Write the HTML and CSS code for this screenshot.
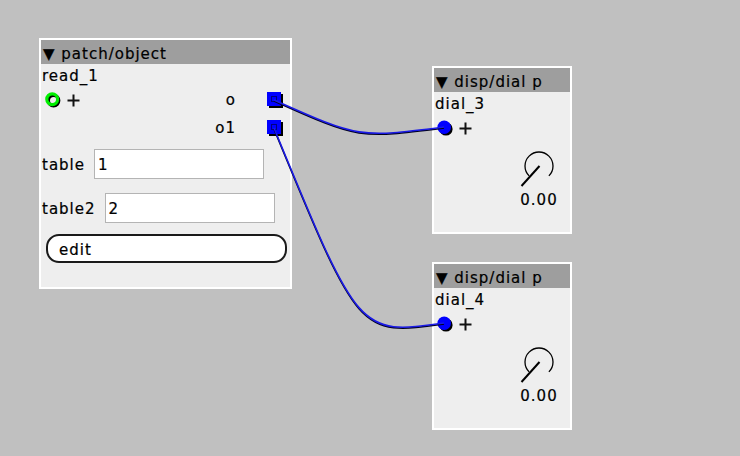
FILE: index.html
```html
<!DOCTYPE html>
<html>
<head>
<meta charset="utf-8">
<link rel="stylesheet" href="styles.css">
</head>
<body>
<div class="canvas">
  <div class="obj patch">
    <div class="hdr">▼ patch/object</div>
    <div class="name">read_1</div>
    <div class="io">
      <div class="inlets">
        <div class="jrow">
          <svg class="ring" width="16" height="16" viewBox="0 0 16 16"><circle cx="8.6" cy="8.6" r="5.2" fill="none" stroke="#000" stroke-width="3.2"/><circle cx="7.2" cy="7.2" r="5.4" fill="none" stroke="#00ee00" stroke-width="3.2"/></svg>
          <svg class="plus" width="13" height="13" viewBox="0 0 13 13"><path d="M6.5 0.5V12.5M0.5 6.5H12.5" stroke="#111" stroke-width="2"/></svg>
        </div>
      </div>
      <div class="outlets">
        <div class="orow"><span class="olbl">o</span><svg class="sq" width="16" height="16" viewBox="0 0 16 16"><rect x="2" y="2" width="14" height="14" fill="#000"/><rect x="0" y="0" width="14" height="14" fill="#0000ff"/><rect x="4.5" y="4.5" width="5" height="5" fill="none" stroke="#000" stroke-width="1" stroke-dasharray="1 1"/></svg></div>
        <div class="orow"><span class="olbl">o1</span><svg class="sq" width="16" height="16" viewBox="0 0 16 16"><rect x="2" y="2" width="14" height="14" fill="#000"/><rect x="0" y="0" width="14" height="14" fill="#0000ff"/><rect x="4.5" y="4.5" width="5" height="5" fill="none" stroke="#000" stroke-width="1" stroke-dasharray="1 1"/></svg></div>
      </div>
    </div>
    <div class="param p1"><span class="plbl">table</span><div class="field">1</div></div>
    <div class="param p2"><span class="plbl">table2</span><div class="field">2</div></div>
    <div class="btn">edit</div>
  </div>

  <div class="obj dial d1">
    <div class="hdr">▼ disp/dial p</div>
    <div class="name">dial_3</div>
    <div class="jrow din">
      <svg class="dot" width="16" height="16" viewBox="0 0 16 16"><circle cx="9" cy="9" r="6.6" fill="#000"/><circle cx="7.2" cy="7.2" r="6.8" fill="#0000ff"/></svg>
      <svg class="plus" width="13" height="13" viewBox="0 0 13 13"><path d="M6.5 0.5V12.5M0.5 6.5H12.5" stroke="#111" stroke-width="2"/></svg>
    </div>
    <div class="knobwrap">
      <svg class="knob" width="40" height="40" viewBox="0 0 40 40"><path d="M10.1 25.9A14 14 0 1 1 29.9 25.9" fill="none" stroke="#000" stroke-width="1.3"/><path d="M20.5 16L2.5 36" stroke="#000" stroke-width="2"/></svg>
      <div class="val">0.00</div>
    </div>
  </div>

  <div class="obj dial d2">
    <div class="hdr">▼ disp/dial p</div>
    <div class="name">dial_4</div>
    <div class="jrow din">
      <svg class="dot" width="16" height="16" viewBox="0 0 16 16"><circle cx="9" cy="9" r="6.6" fill="#000"/><circle cx="7.2" cy="7.2" r="6.8" fill="#0000ff"/></svg>
      <svg class="plus" width="13" height="13" viewBox="0 0 13 13"><path d="M6.5 0.5V12.5M0.5 6.5H12.5" stroke="#111" stroke-width="2"/></svg>
    </div>
    <div class="knobwrap">
      <svg class="knob" width="40" height="40" viewBox="0 0 40 40"><path d="M10.1 25.9A14 14 0 1 1 29.9 25.9" fill="none" stroke="#000" stroke-width="1.3"/><path d="M20.5 16L2.5 36" stroke="#000" stroke-width="2"/></svg>
      <div class="val">0.00</div>
    </div>
  </div>

  <svg class="wires" width="740" height="456" viewBox="0 0 740 456">
    <g fill="none" stroke-width="1.6">
      <path class="wshadow" d="M274 101C359 139 359 139 444 128"/>
      <path class="wshadow" d="M274 129C359 336 359 336 444 324"/>
      <path class="wire" d="M274 100C359 138 359 138 444 127"/>
      <path class="wire" d="M274 128C359 335 359 335 444 323"/>
    </g>
  </svg>
</div>
</body>
</html>
```

FILE: styles.css
```css
* { box-sizing: border-box; }

body {
  margin: 0;
  background: #c0c0c0;
  font-family: "DejaVu Sans", "Liberation Sans", sans-serif;
  font-size: 15px;
  letter-spacing: 1px;
  color: #000;
  -webkit-text-stroke: 0.2px #000;
}

.canvas {
  position: relative;
  width: 740px;
  height: 456px;
  overflow: hidden;
}

.obj {
  position: absolute;
  background: #eeeeee;
  border: 2px solid #ffffff;
  display: flex;
  flex-direction: column;
}

.patch { left: 39px; top: 38px; width: 253px; height: 251px; }
.d1 { left: 432px; top: 66px; width: 140px; height: 168px; }
.d2 { left: 432px; top: 262px; width: 140px; height: 168px; }

.hdr {
  background: #9e9e9e;
  height: 24px;
  padding: 4px 0 0 2px;
  line-height: 20px;
  white-space: nowrap;
  overflow: hidden;
}

.name {
  height: 22px;
  padding: 2px 0 0 1px;
  line-height: 20px;
  white-space: nowrap;
}

.io {
  display: flex;
  justify-content: space-between;
}

.jrow {
  height: 28px;
  display: flex;
  align-items: center;
}

.ring { margin-left: 4px; }
.plus { margin-left: 6px; }

.din .dot { margin-left: 3px; }
.din .plus { margin-left: 6px; }

.outlets {
  display: flex;
  flex-direction: column;
}

.orow {
  height: 28px;
  display: flex;
  align-items: center;
  justify-content: flex-end;
  padding-right: 7px;
}

.sq { margin-left: 31px; }

.param {
  display: flex;
  align-items: baseline;
  gap: 9px;
  padding-left: 1px;
}
.p1 { margin-top: 7px; }
.p2 { margin-top: 14px; }

.field {
  width: 170px;
  height: 30px;
  background: #ffffff;
  border: 1px solid #b4b4b4;
  padding: 6px 0 0 3px;
  line-height: 18px;
}

.btn {
  margin: 11px 3px 0 5px;
  height: 29px;
  border: 2px solid #1a1a1a;
  border-radius: 13px;
  background: #ffffff;
  padding: 3px 0 0 11px;
  line-height: 22px;
}

.knobwrap {
  align-self: flex-end;
  margin: 8px 11px 0 0;
  width: 40px;
  display: flex;
  flex-direction: column;
  align-items: center;
}

.knob { display: block; }

.val {
  margin-top: 1px;
  line-height: 18px;
  text-align: center;
}

.wires {
  position: absolute;
  left: 0;
  top: 0;
  pointer-events: none;
}

.wshadow { stroke: #000020; }
.wire { stroke: #1a1ae6; }
```
